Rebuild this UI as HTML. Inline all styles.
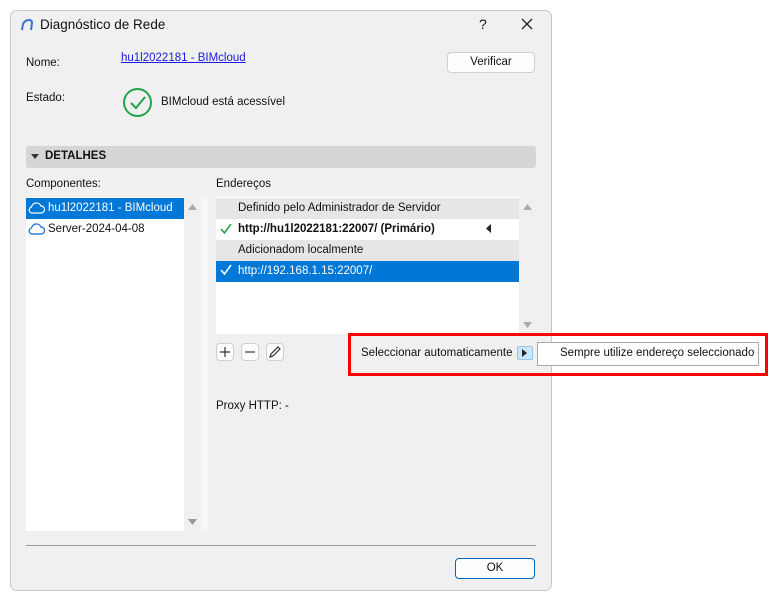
<!DOCTYPE html>
<html><head><meta charset="utf-8"><style>
*{box-sizing:border-box;margin:0;padding:0}
body{width:773px;height:603px;background:#fff;font-family:"Liberation Sans",sans-serif;font-size:11.5px;color:#111;position:relative;overflow:hidden}
.a{position:absolute;white-space:nowrap}
.dlg{position:absolute;left:10px;top:10px;width:542px;height:581px;background:#f0f0f0;border:1px solid #c8c8c8;border-radius:7px}
.btn{position:absolute;background:#fdfdfd;border:1px solid #cfcfcf;border-radius:4px;text-align:center}
</style></head><body>
<div class="dlg"></div>
<svg class="a" style="left:20px;top:18px" width="14" height="14"><path d="M2 12 L3 6 Q5 2 9 2 Q12 2 12 5 L11 12" fill="none" stroke="#3c6fd6" stroke-width="2"/></svg>
<div class="a" style="left:40px;top:17px;font-size:13.5px">Diagnóstico de Rede</div>
<div class="a" style="left:479px;top:16px;font-size:14px">?</div>
<svg class="a" style="left:521px;top:18px" width="12" height="12"><path d="M1 1L11 11M11 1L1 11" stroke="#222" stroke-width="1.3"/></svg>
<div class="a" style="left:26px;top:57px">Nome:</div>
<div class="a" style="left:121px;top:52px;color:#1a1adc;text-decoration:underline">hu1l2022181 - BIMcloud</div>
<div class="btn" style="left:447px;top:52px;width:88px;height:21px;line-height:19px">Verificar</div>
<div class="a" style="left:26px;top:92px">Estado:</div>
<svg class="a" style="left:122px;top:87px" width="31" height="31"><circle cx="15.5" cy="15.5" r="13.5" fill="none" stroke="#1fa64a" stroke-width="2"/><path d="M9 16l5 5 9-11" fill="none" stroke="#1fa64a" stroke-width="2"/></svg>
<div class="a" style="left:161px;top:96px">BIMcloud está acessível</div>
<div class="a" style="left:26px;top:146px;width:510px;height:22px;background:#d6d6d6;border-radius:3px"></div>
<svg class="a" style="left:31px;top:153px" width="8" height="8"><path d="M0 1h8L4 6z" fill="#333"/></svg>
<div class="a" style="left:45px;top:150px;font-weight:bold">DETALHES</div>
<div class="a" style="left:26px;top:178px">Componentes:</div>
<div class="a" style="left:216px;top:178px">Endereços</div>
<div class="a" style="left:26px;top:197px;width:158px;height:334px;background:#fff"></div>
<div class="a" style="left:26px;top:198px;width:158px;height:21px;background:#0078d7"></div>
<svg class="a" style="left:28px;top:201px" width="18" height="14"><path d="M5 12H13a3.5 3.5 0 0 0 0-7 5 5 0 0 0-9.5 1A3 3 0 0 0 5 12" fill="none" stroke="#fff" stroke-width="1.2"/></svg>
<div class="a" style="left:48px;top:202px;color:#fff">hu1l2022181 - BIMcloud</div>
<svg class="a" style="left:28px;top:222px" width="18" height="14"><path d="M5 12H13a3.5 3.5 0 0 0 0-7 5 5 0 0 0-9.5 1A3 3 0 0 0 5 12" fill="none" stroke="#2a7be0" stroke-width="1.4"/></svg>
<div class="a" style="left:48px;top:223px">Server-2024-04-08</div>
<svg class="a" style="left:188px;top:203px" width="10" height="8"><path d="M0 7h9L4.5 1z" fill="#aaa"/></svg>
<svg class="a" style="left:188px;top:518px" width="10" height="8"><path d="M0 1h9L4.5 7z" fill="#999"/></svg>
<div class="a" style="left:201px;top:197px;width:7px;height:334px;background:#f7f7f7"></div>
<div class="a" style="left:216px;top:197px;width:303px;height:137px;background:#fff"></div>
<div class="a" style="left:216px;top:198px;width:303px;height:21px;background:#e6e6e6"></div>
<div class="a" style="left:238px;top:202px">Definido pelo Administrador de Servidor</div>
<svg class="a" style="left:220px;top:223px" width="12" height="12"><path d="M1 6l3.5 4L11 1" fill="none" stroke="#1fa64a" stroke-width="1.6"/></svg>
<div class="a" style="left:238px;top:223px;font-weight:bold">http://hu1l2022181:22007/ (Primário)</div>
<svg class="a" style="left:486px;top:224px" width="6" height="10"><path d="M5 0v9L0 4.5z" fill="#222"/></svg>
<div class="a" style="left:216px;top:240px;width:303px;height:21px;background:#e6e6e6"></div>
<div class="a" style="left:238px;top:244px">Adicionadom localmente</div>
<div class="a" style="left:216px;top:261px;width:303px;height:21px;background:#0078d7"></div>
<svg class="a" style="left:220px;top:264px" width="12" height="12"><path d="M1 6l3.5 4L11 1" fill="none" stroke="#fff" stroke-width="1.6"/></svg>
<div class="a" style="left:238px;top:265px;color:#fff">http://192.168.1.15:22007/</div>
<svg class="a" style="left:523px;top:203px" width="10" height="8"><path d="M0 7h9L4.5 1z" fill="#aaa"/></svg>
<svg class="a" style="left:523px;top:321px" width="10" height="8"><path d="M0 1h9L4.5 7z" fill="#aaa"/></svg>
<div class="btn" style="left:216px;top:343px;width:18px;height:18px"><svg width="16" height="16"><path d="M8 3v10M3 8h10" stroke="#333" stroke-width="1.2"/></svg></div>
<div class="btn" style="left:241px;top:343px;width:18px;height:18px"><svg width="16" height="16"><path d="M3 8h10" stroke="#333" stroke-width="1.2"/></svg></div>
<div class="btn" style="left:266px;top:343px;width:18px;height:18px"><svg width="16" height="16"><path d="M3 13l1-3 7-7 2 2-7 7z" fill="none" stroke="#333" stroke-width="1.2"/></svg></div>
<div class="a" style="left:348px;top:333px;width:420px;height:43px;border:3px solid #f00"></div>
<div class="a" style="left:361px;top:347px">Seleccionar automaticamente</div>
<div class="a" style="left:517px;top:346px;width:16px;height:14px;background:#cce4f7;border:1px solid #99c4ea;border-radius:2px"></div>
<svg class="a" style="left:522px;top:349px" width="6" height="8"><path d="M0 0v8l5-4z" fill="#222"/></svg>
<div class="a" style="left:537px;top:342px;width:222px;height:24px;background:#fff;border:1px solid #aaa"></div>
<div class="a" style="left:560px;top:347px">Sempre utilize endereço seleccionado</div>
<div class="a" style="left:216px;top:400px">Proxy HTTP: -</div>
<div class="a" style="left:26px;top:545px;width:510px;height:1px;background:#999"></div>
<div class="btn" style="left:455px;top:558px;width:80px;height:21px;line-height:19px;border:1px solid #0067c0">OK</div>
</body></html>
